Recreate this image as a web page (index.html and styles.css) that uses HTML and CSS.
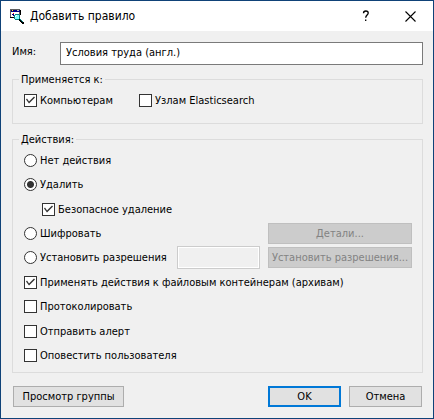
FILE: index.html
```html
<!DOCTYPE html>
<html lang="ru">
<head>
<meta charset="utf-8">
<title>Добавить правило</title>
<link rel="stylesheet" href="styles.css">
</head>
<body>
<main class="dialog">
  <header class="titlebar">
    <svg class="app-icon" viewBox="0 0 14 15" width="14" height="15" shape-rendering="crispEdges" aria-hidden="true">
      <path fill="#606060" d="M0 0h10v9H0z"/>
      <path fill="#fff" d="M1 3h8v5H1z"/>
      <path fill="#000080" d="M1 1h9v2H1z"/>
      <path fill="#ffff00" d="M2 1h1v1H2z"/>
      <path fill="#c0c0c0" d="M7 1h2v1H7z"/>
      <path fill="#000" d="M0 8h5v1H0zM10 1h1v5h-1z"/>
      <path fill="#ff0000" d="M3 4h1v1H3z"/>
      <path fill="#000080" d="M2 5h2v1H2zM3 6h1v1H3z"/>
      <path fill="#008080" d="M5 5h4v1H5zM4 6h1v4H4zM9 6h1v4H9zM5 10h4v1H5z"/>
      <path fill="#7fffff" d="M5 6h4v4H5z"/>
      <path fill="#fff" d="M6 6h1v1H6zM5 7h1v1H5z"/>
      <path fill="#000" d="M9 10h1v2H9zM10 11h1v2h-1zM11 12h1v2h-1zM12 13h1v2h-1zM13 13h1v2h-1z"/>
      <path fill="#008080" d="M10 10h1v1h-1zM11 11h1v1h-1zM12 12h1v1h-1z"/>
    </svg>
    <h1 class="title">Добавить правило</h1>
    <button class="caption-button" type="button" aria-label="Справка">
      <svg viewBox="0 0 8 12" width="8" height="12" aria-hidden="true"><path d="M1.500 3.200C1.500 1.700 2.500 1 3.800 1S6.200 1.800 6.200 3.100C6.200 5 3.700 5.200 3.700 7.800M3.700 9.400v1.600" fill="none" stroke="#000" stroke-width="1.300"/></svg>
    </button>
    <button class="caption-button" type="button" aria-label="Закрыть">
      <svg viewBox="0 0 11 11" width="11" height="11" aria-hidden="true"><path d="M.5.5l10 10M10.500.5l-10 10" fill="none" stroke="#000" stroke-width="1.100"/></svg>
    </button>
  </header>
  <form class="content">
    <div class="name-row">
      <label for="name">Имя:</label>
      <input class="field" id="name" type="text" value="Условия труда (англ.)">
    </div>
    <fieldset class="group">
      <legend>Применяется к:</legend>
      <div class="targets">
        <label class="option"><input type="checkbox" checked>Компьютерам</label>
        <label class="option"><input type="checkbox">Узлам Elasticsearch</label>
      </div>
    </fieldset>
    <fieldset class="group">
      <legend>Действия:</legend>
      <div class="actions">
        <div class="rows">
          <label class="option"><input type="radio" name="action">Нет действия</label>
          <label class="option"><input type="radio" name="action" checked>Удалить</label>
        </div>
        <div class="rows">
          <label class="option nested"><input type="checkbox" checked>Безопасное удаление</label>
          <div class="row">
            <label class="option"><input type="radio" name="action">Шифровать</label>
            <button class="button wide" type="button" disabled>Детали...</button>
          </div>
          <div class="row">
            <label class="option"><input type="radio" name="action">Установить разрешения</label>
            <input class="field permissions" type="text" aria-label="Разрешения" disabled>
            <button class="button wide" type="button" disabled>Установить разрешения...</button>
          </div>
        </div>
        <div class="rows">
          <label class="option"><input type="checkbox" checked>Применять действия к файловым контейнерам (архивам)</label>
          <label class="option"><input type="checkbox">Протоколировать</label>
        </div>
        <div class="rows">
          <label class="option"><input type="checkbox">Отправить алерт</label>
          <label class="option"><input type="checkbox">Оповестить пользователя</label>
        </div>
      </div>
    </fieldset>
    <footer class="buttons">
      <button class="button preview" type="button">Просмотр группы</button>
      <button class="button default" type="submit">OK</button>
      <button class="button" type="button">Отмена</button>
    </footer>
  </form>
</main>
</body>
</html>
```
FILE: styles.css
```css
* {
  box-sizing: border-box;
}

body {
  margin: 0;
  background: #f0f0f0;
  color: #000;
  font: 11px/15px "DejaVu Sans Condensed", "DejaVu Sans", sans-serif;
}

input,
button {
  margin: 0;
  font: inherit;
  color: inherit;
}

.dialog {
  display: flex;
  flex-direction: column;
  min-height: 100vh;
  border: 1px solid #0f4278;
}

.titlebar {
  display: flex;
  align-items: center;
  height: 30px;
  padding-left: 9px;
  background: #fff;
}

.title {
  flex: 1;
  margin: 0 0 0 6px;
  font: 12px/16px "DejaVu Sans Condensed", "DejaVu Sans", sans-serif;
}

.caption-button {
  display: flex;
  align-items: center;
  justify-content: center;
  width: 45px;
  height: 28px;
  padding: 0;
  border: 0;
  background: none;
}

.content {
  flex: 1;
  display: flex;
  flex-direction: column;
  padding: 11px 10px 11px 11px;
}

.name-row {
  display: grid;
  grid-template-columns: 48px 1fr;
  align-items: center;
  margin-bottom: 7px;
}

.name-row label {
  padding-bottom: 4px;
}

.field {
  min-width: 0;
  height: 23px;
  padding: 0 5px 2px;
  border: 1px solid #7a7a7a;
  border-radius: 0;
  background: #fff;
}

.field:disabled {
  border-color: #ccc;
  background: #f0f0f0;
  box-shadow: inset 0 0 0 1px #fff;
}

.group {
  min-width: 0;
  margin: 0 0 8px;
  padding: 0 10px 0 11px;
  border: 1px solid #dcdcdc;
}

.group legend {
  margin-left: -5px;
  padding: 0 2px;
}

.targets {
  display: grid;
  grid-template-columns: 115px 1fr;
  padding: 1px 0 11px;
}

.actions {
  display: flex;
  flex-direction: column;
  gap: 1px;
  padding: 1px 0 5px;
}

.rows {
  display: grid;
  grid-auto-rows: 24px;
}

.row {
  display: flex;
  align-items: center;
  gap: 8px;
}

.row .option {
  flex: 1;
}

.option {
  display: flex;
  align-items: center;
  gap: 3px;
  white-space: nowrap;
}

.targets .option {
  height: 24px;
}

.nested {
  margin-left: 18px;
}

.option input {
  flex: none;
  appearance: none;
  width: 13px;
  height: 13px;
  border: 1px solid #333;
  background: #fff;
}

.option input[type="radio"] {
  border-radius: 50%;
}

.option input[type="radio"]:checked {
  background: radial-gradient(circle, #333 3px, #fff 4px);
}

.option input[type="checkbox"]:checked::before {
  content: "";
  display: block;
  width: 11px;
  height: 11px;
  background: #333;
  clip-path: polygon(1px 5px, 2px 4px, 4px 7px, 9px 2px, 10px 3px, 4px 9px);
}

.button {
  width: 73px;
  height: 21px;
  padding: 0;
  border: 1px solid #adadad;
  border-radius: 0;
  background: #e1e1e1;
  white-space: nowrap;
}

.button:disabled {
  border-color: #bfbfbf;
  background: #ccc;
  color: #838383;
}

.default {
  border: 2px solid #0078d7;
}

.wide {
  width: 144px;
}

.permissions {
  width: 83px;
}

.buttons {
  display: flex;
  gap: 8px;
  margin-top: auto;
  padding: 0 1px;
}

.preview {
  width: 111px;
  margin-right: auto;
}
```
